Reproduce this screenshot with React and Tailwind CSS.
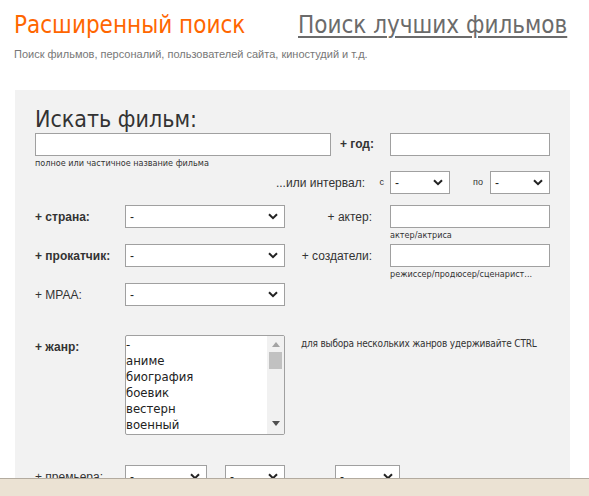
import React from 'react';

const Chevron = () => (
  <svg width="10" height="7" viewBox="0 0 10 7" className="shrink-0">
    <path d="M1 1.2 L5 5.2 L9 1.2" fill="none" stroke="#222" strokeWidth="2" />
  </svg>
);

const Select = ({ w }) => (
  <div className={`${w} h-[23px] bg-white border border-[#a0a0a0] flex items-center justify-between pl-[4px] pr-[6px] text-[12px] text-[#222]`}>
    <span>-</span>
    <Chevron />
  </div>
);

const Input = ({ w }) => (
  <div className={`${w} h-[23px] bg-white border border-[#a0a0a0]`} />
);

const Hint = ({ children, className = '' }) => (
  <div className={`font-['DejaVu_Sans_Condensed',sans-serif] leading-[12px] text-[#333] ${className}`}>{children}</div>
);

const genres = ['-', 'аниме', 'биография', 'боевик', 'вестерн', 'военный'];

const App = () => {
  return (
    <div className="min-h-[496px] bg-white font-['Liberation_Sans',Arial,sans-serif] text-[#333]">
      {/* Header */}
      <div className="flex items-start pl-[14px] pt-[8px]">
        <h1 className="font-['DejaVu_Sans_Condensed',sans-serif] text-[24px] leading-[34px] text-[#ff6600] w-[284px]">Расширенный поиск</h1>
        <a className="font-['DejaVu_Sans_Condensed',sans-serif] text-[24px] leading-[34px] text-[#6b6b6b] underline decoration-[2px] underline-offset-[3px]">Поиск лучших фильмов</a>
      </div>
      <p className="pl-[14px] mt-[5px] text-[11px] leading-[14px] text-[#777]">Поиск фильмов, персоналий, пользователей сайта, киностудий и т.д.</p>

      {/* Panel */}
      <div className="ml-[15px] mt-[29px] w-[555px] bg-[#f2f2f2] pl-[20px] pt-[15px] pb-[40px]">
        <h2 className="font-['DejaVu_Sans_Condensed',sans-serif] text-[23px] leading-[28px] text-[#333]">Искать фильм:</h2>

        {/* film + year */}
        <div className="flex items-center">
          <Input w="w-[296px]" />
          <span className="ml-[9px] w-[50px] text-[12px] font-bold -mt-[2px]">+ год:</span>
          <Input w="w-[160px]" />
        </div>
        <Hint className="mt-[1px] text-[9px]">полное или частичное название фильма</Hint>

        {/* interval */}
        <div className="flex items-center mt-[2px] h-[23px]">
          <span className="w-[330px] text-right text-[12px]">...или интервал:</span>
          <span className="w-[25px] text-right pr-[6px] text-[9px]">с</span>
          <Select w="w-[60px]" />
          <span className="w-[40px] text-right pr-[7px] text-[9px]">по</span>
          <Select w="w-[60px]" />
        </div>

        {/* country + actor */}
        <div className="flex items-start mt-[11px] h-[39px]">
          <span className="w-[90px] h-[23px] flex items-center text-[12px] font-bold">+ страна:</span>
          <Select w="w-[160px]" />
          <span className="w-[87px] h-[23px] flex items-center justify-end text-[12px]">+ актер:</span>
          <div className="ml-[18px]">
            <Input w="w-[160px]" />
            <Hint className="mt-[1px] text-[9px]">актер/актриса</Hint>
          </div>
        </div>

        {/* distributor + creators */}
        <div className="flex items-start h-[39px]">
          <span className="w-[90px] h-[23px] flex items-center text-[12px] font-bold">+ прокатчик:</span>
          <Select w="w-[160px]" />
          <span className="w-[87px] h-[23px] flex items-center justify-end text-[12px]">+ создатели:</span>
          <div className="ml-[18px]">
            <Input w="w-[160px]" />
            <Hint className="mt-[1px] text-[9px]">режиссер/продюсер/сценарист...</Hint>
          </div>
        </div>

        {/* MPAA */}
        <div className="flex items-center">
          <span className="w-[90px] text-[12px]">+ MPAA:</span>
          <Select w="w-[160px]" />
        </div>

        {/* genre */}
        <div className="flex items-start mt-[29px]">
          <span className="w-[90px] pt-[3px] text-[12px] font-bold">+ жанр:</span>
          <div className="w-[160px] h-[100px] bg-white border border-[#a0a0a0] rounded-[2px] flex overflow-hidden">
            <div className="flex-1 font-['DejaVu_Sans_Condensed',sans-serif] text-[13px] leading-[16px] text-[#222] pt-[1px]">
              {genres.map((g) => (
                <div key={g}>{g}</div>
              ))}
            </div>
            <div className="w-[17px] bg-[#f1f1f1] flex flex-col items-center">
              <svg width="8" height="5" viewBox="0 0 8 5" className="mt-[6px]"><path d="M0 5 L4 0 L8 5 Z" fill="#a3a3a3" /></svg>
              <div className="mt-[5px] w-[13px] h-[17px] bg-[#c1c1c1]" />
              <div className="flex-1" />
              <svg width="8" height="5" viewBox="0 0 8 5" className="mb-[8px]"><path d="M0 0 L8 0 L4 5 Z" fill="#505050" /></svg>
            </div>
          </div>
          <Hint className="ml-[16px] pt-[3px] text-[10px] tracking-[-0.2px]">для выбора нескольких жанров удерживайте CTRL</Hint>
        </div>

        {/* premiere */}
        <div className="flex items-start mt-[30px]">
          <span className="w-[90px] pt-[3px] text-[12px]">+ премьера:</span>
          <Select w="w-[82px]" />
          <div className="w-[18px]" />
          <Select w="w-[60px]" />
          <div className="w-[50px]" />
          <Select w="w-[65px]" />
        </div>
      </div>

      {/* Bottom bar */}
      <div className="fixed left-0 right-0 bottom-0 h-[18px] bg-[#ebe2d3] border-t border-[#b3ab9f]" />
    </div>
  );
};

export default App;
